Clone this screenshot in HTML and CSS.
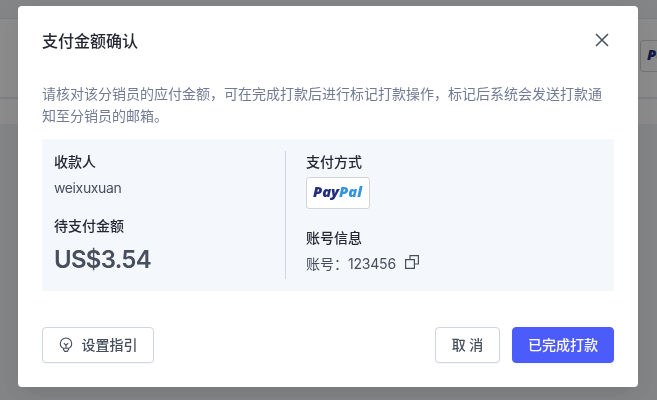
FILE: index.html
```html
<!DOCTYPE html>
<html lang="zh-CN">
<head>
<meta charset="utf-8">
<title>支付金额确认</title>
<link rel="stylesheet" href="styles.css">
</head>
<body>
<div class="page">
  <div class="page-header"></div>
  <div class="page-row"><span class="pay-card"><svg class="paypal" viewBox="0 0 54 20"><text x="2" y="14" class="logo-text" textLength="49" lengthAdjust="spacingAndGlyphs"><tspan class="logo-dark">Pay</tspan><tspan class="logo-light">Pal</tspan></text></svg></span></div>
  <div class="page-footer"></div>
</div>
<div class="mask">
  <section class="modal" role="dialog">
    <header class="modal-header">
      <h1 class="title">支付金额确认</h1>
      <svg class="close" viewBox="0 0 14 14"><path d="M1 1l12 12M13 1L1 13"/></svg>
    </header>
    <p class="description">请核对该分销员的应付金额，可在完成打款后进行标记打款操作，标记后系统会发送打款通知至分销员的邮箱。</p>
    <div class="panel">
      <div class="column payee">
        <h2 class="label">收款人</h2>
        <div class="value name">weixuxuan</div>
        <h2 class="label">待支付金额</h2>
        <div class="amount">US$3.54</div>
      </div>
      <div class="column method">
        <h2 class="label">支付方式</h2>
        <span class="pay-card"><svg class="paypal" viewBox="0 0 54 20"><text x="2" y="14" class="logo-text" textLength="49" lengthAdjust="spacingAndGlyphs"><tspan class="logo-dark">Pay</tspan><tspan class="logo-light">Pal</tspan></text></svg></span>
        <h2 class="label">账号信息</h2>
        <div class="value account"><span>账号：</span><span class="number">123456</span>
          <svg class="copy" viewBox="0 0 14 14"><path d="M5 4.5V.6h8.4V9H9.5M.6 4.6H9.4v8.8H.6z"/></svg>
        </div>
      </div>
    </div>
    <footer class="modal-footer">
      <button class="button guide"><svg class="bulb" viewBox="0 0 14 16"><path d="M4.5 11.3C2.2 10.4 1.3 8.7 1.3 6.7a5.7 5.7 0 0 1 11.4 0c0 2-.9 3.7-3.2 4.6M4.5 11.3h5v1.3L8.2 14.4H5.8L4.5 12.6zM4.8 6.2L7 8.2l2.2-2M7 8.2v3"/></svg><span>设置指引</span></button>
      <button class="button cancel">取 消</button>
      <button class="button primary">已完成打款</button>
    </footer>
  </section>
</div>
</body>
</html>
```

FILE: styles.css
```css
* { box-sizing: border-box; }
body {
  margin: 0;
  height: 400px;
  overflow: hidden;
  background: #f0f2f5;
  font: 14px/22px Inter, "Noto Sans CJK SC", sans-serif;
  color: #474f5e;
}
h1, h2, p { margin: 0; }
.page { overflow: hidden; }
.page-header { height: 19px; border-bottom: 1px solid #e2e6ee; }
.page-row {
  height: 80px;
  padding: 21px 0 0 640px;
  background: #fff;
  border-bottom: 2px solid #e6e9f2;
}
.page-footer { height: 25px; background: #fff; }
.mask {
  position: fixed;
  inset: 0;
  padding: 6px 19px 13px 18px;
  background: rgba(0, 0, 0, .45);
}
.modal {
  height: 381px;
  padding: 24px;
  display: flex;
  flex-direction: column;
  background: #fff;
  border-radius: 4px;
  box-shadow: 0 6px 16px -8px rgba(0, 0, 0, .08), 0 9px 28px rgba(0, 0, 0, .05), 0 12px 48px 16px rgba(0, 0, 0, .03);
}
.modal-header {
  height: 22px;
  margin-bottom: 31px;
  display: flex;
  align-items: center;
  justify-content: space-between;
}
.title { font-size: 16px; line-height: 22px; font-weight: 500; color: #242833; }
.close { width: 14px; height: 14px; margin: -2px 5px 0 0; fill: none; stroke: #474f5e; stroke-width: 1.5; }
.description { height: 44px; margin-bottom: 12px; color: #717b95; }
.panel { height: 152px; padding: 12px; display: flex; background: #f4f7fc; }
.column { height: 128px; }
.payee { width: 244px; flex: none; padding-right: 12px; margin-right: 0; border-right: 1px solid #cfd5e3; }
.method { padding-left: 20px; }
.payee { width: 232px; }
.label { margin-bottom: 4px; font-size: 14px; font-weight: 500; line-height: 22px; color: #242833; }
.value { line-height: 22px; }
.name { margin-bottom: 16px; letter-spacing: -.38px; }
.amount { font-size: 24px; line-height: 38px; font-weight: 600; letter-spacing: -.75px; }
.number { letter-spacing: -.2px; }
.pay-card {
  display: flex;
  align-items: center;
  justify-content: center;
  width: 64px;
  height: 32px;
  background: #fff;
  border: 1px solid #d2d4d8;
  border-radius: 3px;
}
.method .pay-card { margin-bottom: 18px; }
.paypal { flex: none; width: 54px; height: 20px; }
.logo-text { font: italic 800 13.5px "Open Sans", sans-serif; }
.logo-dark { fill: #222d7e; }
.logo-light { fill: #3494dc; }
.account { display: flex; align-items: center; }
.copy { width: 14px; height: 14px; margin: -4px 0 0 9px; fill: none; stroke: #474f5e; stroke-width: 1.2; }
.modal-footer { margin-top: auto; display: flex; }
.button {
  height: 36px;
  padding: 0;
  display: flex;
  align-items: center;
  justify-content: center;
  background: #fff;
  border: 1px solid #d0d5e4;
  border-radius: 4px;
  font: inherit;
  font-weight: 500;
  color: #474f5e;
  box-shadow: 0 1px 2px rgba(50, 70, 120, .06);
}
.guide { width: 112px; gap: 9px; margin-right: auto; }
.bulb { width: 14px; height: 16px; fill: none; stroke: #474f5e; stroke-width: 1.1; }
.cancel { width: 65px; margin-right: 12px; }
.primary { width: 102px; background: #4c5cfb; border-color: #4c5cfb; color: #fff; }
```
